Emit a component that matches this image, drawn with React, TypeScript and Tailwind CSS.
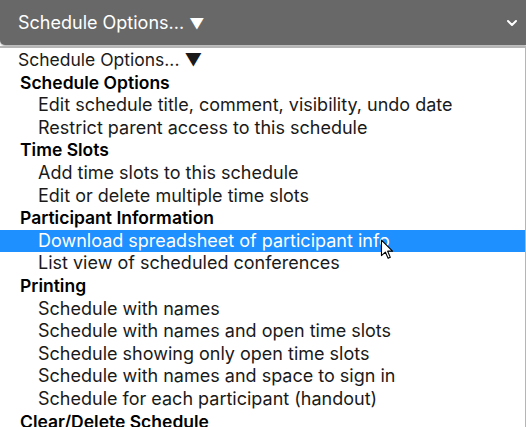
import { ChevronDown } from "lucide-react";

type Item = { label: string; group?: boolean; selected?: boolean; first?: boolean };

const items: Item[] = [
  { label: "Schedule Options... \u25BC", first: true },
  { label: "Schedule Options", group: true },
  { label: "Edit schedule title, comment, visibility, undo date" },
  { label: "Restrict parent access to this schedule" },
  { label: "Time Slots", group: true },
  { label: "Add time slots to this schedule" },
  { label: "Edit or delete multiple time slots" },
  { label: "Participant Information", group: true },
  { label: "Download spreadsheet of participant info", selected: true },
  { label: "List view of scheduled conferences" },
  { label: "Printing", group: true },
  { label: "Schedule with names" },
  { label: "Schedule with names and open time slots" },
  { label: "Schedule showing only open time slots" },
  { label: "Schedule with names and space to sign in" },
  { label: "Schedule for each participant (handout)" },
  { label: "Clear/Delete Schedule", group: true },
];

function Cursor() {
  return (
    <svg
      width="14"
      height="21"
      viewBox="0 0 12 19"
      className="absolute left-[380px] top-[239px]"
    >
      <path
        d="M1 1 L1 15 L4.5 11.8 L7 17.5 L9 16.6 L6.6 11 L11 11 Z"
        fill="#fff"
        stroke="#000"
        strokeWidth="1"
        strokeLinejoin="round"
      />
    </svg>
  );
}

export default function App() {
  return (
    <div className="relative h-[427px] w-[526px] overflow-hidden bg-white font-['Inter','Noto_Sans',sans-serif]">
      {/* select box */}
      <div className="flex h-[45px] items-center justify-between rounded-bl-[5px] bg-[#686868] pl-[18px] pr-[6px] text-[18px] text-white shadow-[0_1px_2px_rgba(0,0,0,0.35)]">
        <span>
          Schedule Options... <span className="text-[15px]">&#9660;</span>
        </span>
        <ChevronDown className="size-[16px]" strokeWidth={3} />
      </div>

      {/* open list */}
      <div className="mt-[1px] border-t-2 border-r border-[#b5b5b5] pt-[1px] text-[18px] text-[#1a1a1a]">
        {items.map((it) => (
          <div
            key={it.label}
            className={
              "h-[22.6px] whitespace-nowrap leading-[22.6px] " +
              (it.selected
                ? "bg-[#1e90ff] pl-[38px] text-white"
                : it.group
                  ? "pl-[20px] text-[17.5px] font-semibold text-black"
                  : it.first
                    ? "pl-[18px] text-[17.5px]"
                    : "pl-[38px]")
            }
          >
            {it.label}
          </div>
        ))}
      </div>

      <Cursor />
    </div>
  );
}
